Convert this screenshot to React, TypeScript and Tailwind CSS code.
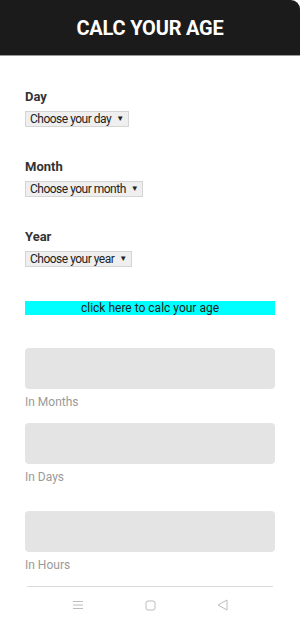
import React from 'react';

function Picker({ label, text }: { label: string; text: string }) {
  return (
    <div className="flex flex-col items-start">
      <span className="text-[13px] leading-4 font-bold text-[#333]">{label}</span>
      <div className="mt-[6px] inline-flex h-4 items-center gap-[5px] border border-[#d4d4d4] bg-[#efefef] pl-[4px] pr-[4px] text-[12px] leading-4 tracking-[-0.5px] text-[#222]">
        <span>{text}</span>
        <span className="text-[8px] leading-none">▼</span>
      </div>
    </div>
  );
}

function Result({ label, gap }: { label: string; gap: string }) {
  return (
    <div className={gap}>
      <div className="h-[41px] rounded-[4px] bg-[#e4e4e4]" />
      <div className="mt-[6px] text-[12px] leading-[15px] text-[#9a9a9a]">{label}</div>
    </div>
  );
}

export default function App() {
  return (
    <div className="flex h-[623px] w-[300px] flex-col bg-white font-['Roboto',sans-serif]">
      <header className="flex h-[57px] items-center justify-center rounded-tr-[9px] border-b border-[#9a9a9a] bg-[#1b1b1b]">
        <h1 className="text-[20px] font-bold tracking-[-0.2px] text-white">CALC YOUR AGE</h1>
      </header>

      <main className="flex flex-col px-[25px]">
        <div className="mt-[33px]">
          <Picker label="Day" text="Choose your day" />
        </div>
        <div className="mt-[32px]">
          <Picker label="Month" text="Choose your month" />
        </div>
        <div className="mt-[32px]">
          <Picker label="Year" text="Choose your year" />
        </div>

        <button className="mt-[34px] h-[14px] bg-[#00ffff] text-[12px] leading-[14px] text-[#222]">
          click here to calc your age
        </button>

        <Result label="In Months" gap="mt-[33px]" />
        <Result label="In Days" gap="mt-[13px]" />
        <Result label="In Hours" gap="mt-[26px]" />
      </main>

      <div className="mx-[27px] mt-[13px] border-t border-[#dcdcdc]" />

      <nav className="flex h-[36px] items-center justify-between px-[72px]">
        <svg width="12" height="10" viewBox="0 0 12 10" fill="none" stroke="#bdbdbd" strokeWidth="1">
          <path d="M1 1.5h10M1 5h10M1 8.5h10" />
        </svg>
        <svg width="11" height="11" viewBox="0 0 11 11" fill="none" stroke="#bdbdbd" strokeWidth="1">
          <rect x="1" y="1" width="9" height="9" rx="2" />
        </svg>
        <svg width="11" height="12" viewBox="0 0 11 12" fill="none" stroke="#bdbdbd" strokeWidth="1">
          <path d="M10 1L1 6l9 5z" strokeLinejoin="round" />
        </svg>
      </nav>
    </div>
  );
}
